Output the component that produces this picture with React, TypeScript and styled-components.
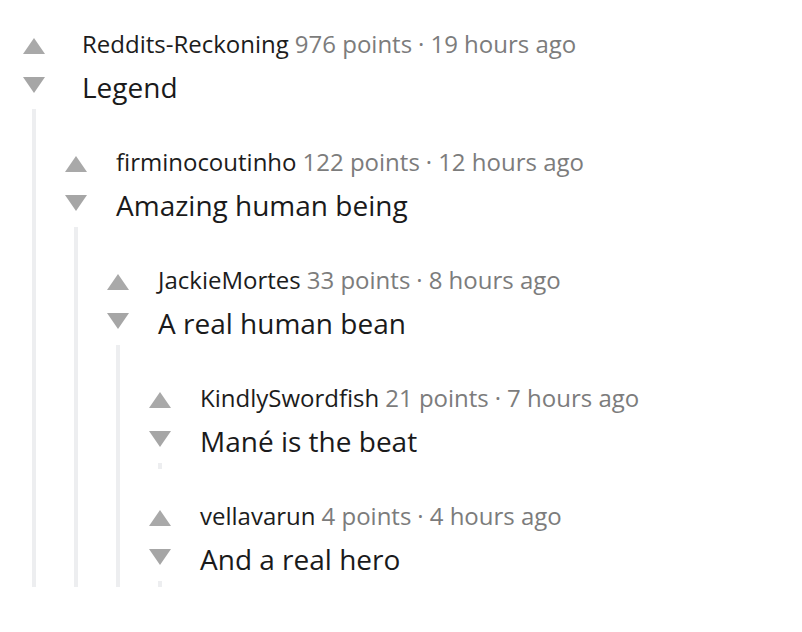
import styled, { createGlobalStyle } from 'styled-components'

type CommentType = {
	id: number
	author: string
	points: number
	time: string
	text: string
	replies: CommentType[]
}

const thread: CommentType = {
	id: 1,
	author: 'Reddits-Reckoning',
	points: 976,
	time: '19 hours ago',
	text: 'Legend',
	replies: [
		{
			id: 2,
			author: 'firminocoutinho',
			points: 122,
			time: '12 hours ago',
			text: 'Amazing human being',
			replies: [
				{
					id: 3,
					author: 'JackieMortes',
					points: 33,
					time: '8 hours ago',
					text: 'A real human bean',
					replies: [
						{
							id: 4,
							author: 'KindlySwordfish',
							points: 21,
							time: '7 hours ago',
							text: 'Mané is the beat',
							replies: [],
						},
						{
							id: 5,
							author: 'vellavarun',
							points: 4,
							time: '4 hours ago',
							text: 'And a real hero',
							replies: [],
						},
					],
				},
			],
		},
	],
}

const GlobalStyle = createGlobalStyle`
	* {
		box-sizing: border-box;
	}

	body {
		margin: 0;
		background: #ffffff;
		font-family: 'Open Sans', 'Noto Sans', sans-serif;
		color: #1a1a1b;
	}
`

const Page = styled.div`
	padding: 28px 0 0 13px;
`

const CommentBox = styled.div<{ $root?: boolean }>`
	display: flex;
	flex-direction: column;
	margin-top: ${p => (p.$root ? '0' : '31px')};
`

const Head = styled.div`
	display: flex;
	height: 81px;
`

const Votes = styled.div`
	width: 42px;
	flex-shrink: 0;
	display: flex;
	flex-direction: column;
	align-items: center;
	padding-top: 10px;
	gap: 23px;
`

const Arrow = styled.span<{ $down?: boolean }>`
	width: 0;
	height: 0;
	border-left: 11.5px solid transparent;
	border-right: 11.5px solid transparent;
	${p =>
		p.$down
			? 'border-top: 16px solid #a6a6a6;'
			: 'border-bottom: 16px solid #a9a9a9;'}
`

const Content = styled.div<{ $root?: boolean }>`
	padding-left: ${p => (p.$root ? '27px' : '19px')};
	min-width: 0;
`

const Meta = styled.div`
	display: flex;
	gap: 6px;
	font-size: 24px;
	line-height: 32px;
	white-space: nowrap;
`

const Author = styled.span`
	color: #1c1c1c;
`

const Muted = styled.span`
	color: #7c7c7c;
`

const Body = styled.div`
	margin-top: 10px;
	font-size: 28px;
	line-height: 34px;
	white-space: nowrap;
`

const Thread = styled.div`
	display: flex;
	padding-top: 6px;
`

const Line = styled.div`
	width: 42px;
	flex-shrink: 0;
	display: flex;
	justify-content: center;
	margin-top: -6px;

	&::before {
		content: '';
		width: 4px;
		background: #edeef0;
	}
`

const Replies = styled.div`
	display: flex;
	flex-direction: column;
	flex: 1;
`

function Comment({ comment, root }: { comment: CommentType; root?: boolean }) {
	const { author, points, time, text, replies } = comment

	return (
		<CommentBox $root={root}>
			<Head>
				<Votes>
					<Arrow />
					<Arrow $down />
				</Votes>
				<Content $root={root}>
					<Meta>
						<Author>{author}</Author>
						<Muted>{points} points</Muted>
						<Muted>·</Muted>
						<Muted>{time}</Muted>
					</Meta>
					<Body>{text}</Body>
				</Content>
			</Head>
			<Thread>
				<Line />
				<Replies>
					{replies.map(reply => (
						<Comment key={reply.id} comment={reply} />
					))}
				</Replies>
			</Thread>
		</CommentBox>
	)
}

export default function App() {
	return (
		<>
			<GlobalStyle />
			<Page>
				<Comment comment={thread} root />
			</Page>
		</>
	)
}
